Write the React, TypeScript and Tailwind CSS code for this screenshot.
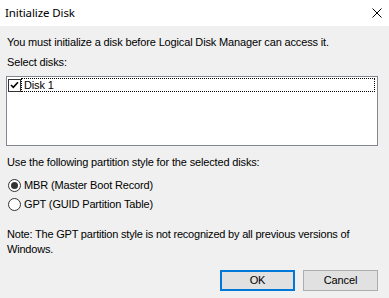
export default function App() {
  return (
    <div className="flex h-[298px] w-[389px] flex-col bg-[#f0f0f0] font-['Liberation_Sans',Arial,sans-serif] text-[11px] leading-[13px] tracking-[-0.15px] text-black">
      {/* Title bar */}
      <div className="flex h-[26px] shrink-0 items-center justify-between bg-white pl-[5px] pr-[6px]">
        <span className="font-['Noto_Sans',sans-serif] text-[11.5px] leading-[16px] tracking-[-0.1px]">Initialize Disk</span>
        <svg width="10" height="10" viewBox="0 0 10 10" className="mr-[1px]">
          <path d="M0.5 0.5 L9.5 9.5 M9.5 0.5 L0.5 9.5" stroke="#000" strokeWidth="1" fill="none" />
        </svg>
      </div>

      {/* Body */}
      <div className="flex flex-1 flex-col pl-[6px] pr-[11px]">
        <p className="mt-[10px] pl-[1px]">You must initialize a disk before Logical Disk Manager can access it.</p>
        <p className="mt-[7px] pl-[1px]">Select disks:</p>

        <div className="mt-[7px] h-[70px] w-[372px] border border-[#828790] bg-white">
          <div className="mt-[1px] flex h-[14px] items-center">
            <span className="ml-[1px] flex h-[13px] w-[13px] items-center justify-center border border-[#333] bg-white">
              <svg width="9" height="8" viewBox="0 0 9 8">
                <path d="M1 4 L3.3 6.3 L8 1.3" stroke="#000" strokeWidth="1.6" fill="none" />
              </svg>
            </span>
            <span className="mr-[2px] flex h-[14px] flex-1 items-center border border-dotted border-black pl-[2px]">
              Disk 1
            </span>
          </div>
        </div>

        <p className="mt-[10px] pl-[1px]">Use the following partition style for the selected disks:</p>

        <div className="mt-[7px] flex flex-col">
          <label className="flex h-[19px] items-center">
            <span className="ml-[2px] flex h-[13px] w-[13px] items-center justify-center rounded-full border border-[#333] bg-white">
              <span className="h-[7px] w-[7px] rounded-full bg-[#333]" />
            </span>
            <span className="ml-[3px]">MBR (Master Boot Record)</span>
          </label>
          <label className="flex h-[19px] items-center">
            <span className="ml-[2px] h-[13px] w-[13px] rounded-full border border-[#333] bg-white" />
            <span className="ml-[3px]">GPT (GUID Partition Table)</span>
          </label>
        </div>

        <p className="mt-[13px] pl-[1px] leading-[15px] tracking-[-0.2px]">
          Note: The GPT partition style is not recognized by all previous versions of
          <br />
          Windows.
        </p>

        <div className="mt-auto mb-[7px] flex justify-end gap-[8px]">
          <button className="h-[21px] w-[75px] border-2 border-[#0078d7] bg-[#e1e1e1] text-[11px]">OK</button>
          <button className="h-[21px] w-[75px] border border-[#adadad] bg-[#e1e1e1] text-[11px]">Cancel</button>
        </div>
      </div>
    </div>
  );
}
